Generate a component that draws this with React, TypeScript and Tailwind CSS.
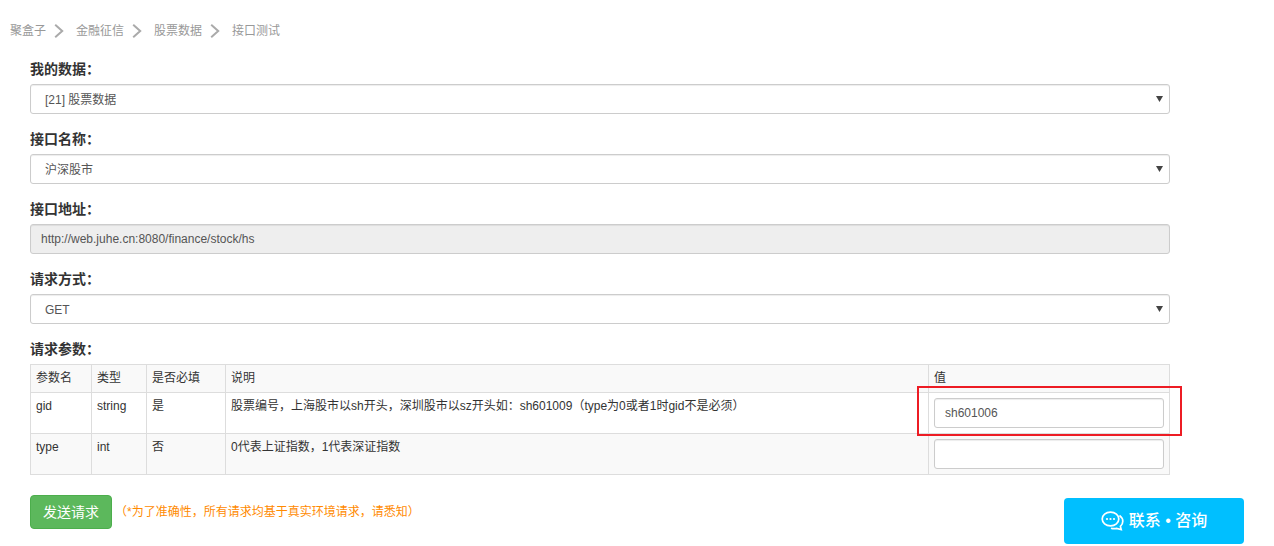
const crumbs = ["聚盒子", "金融征信", "股票数据", "接口测试"];

const gidDesc = "股票编号\uFF0C上海股市以sh开头\uFF0C深圳股市以sz开头如\uFF1Ash601009\uFF08type为0或者1时gid不是必须\uFF09";
const typeDesc = "0代表上证指数\uFF0C1代表深证指数";
const notice = "\uFF08*为了准确性\uFF0C所有请求均基于真实环境请求\uFF0C请悉知\uFF09";

const Chevron = () => (
  <svg width="10" height="14" viewBox="0 0 10 14" fill="none" className="ml-[8px] mr-[12px]">
    <path d="M1.2 0.8 L8.2 7 L1.2 13.2" stroke="#aaaaaa" strokeWidth="2" />
  </svg>
);

const FieldLabel = ({ text }: { text: string }) => (
  <label className="block h-[24px] leading-[18px] text-[14px] font-bold text-[#333]">{text + "\uFF1A"}</label>
);

const FieldSelect = ({ label, value }: { label: string; value: string }) => (
  <div className="mb-[16px]">
    <FieldLabel text={label} />
    <div className="relative">
      <select
        defaultValue={value}
        className="block w-full h-[30px] appearance-none rounded-[3px] border border-[#ccc] bg-white pl-[14px] pt-[2px] text-[12px] text-[#555] shadow-[inset_0_1px_1px_rgba(0,0,0,0.075)]"
      >
        <option>{value}</option>
      </select>
      <svg width="7" height="6" viewBox="0 0 7 6" className="absolute right-[7px] top-[12px] pointer-events-none">
        <path d="M0 0 H7 L3.5 6 Z" fill="#444444" />
      </svg>
    </div>
  </div>
);

const Th = ({ children }: { children: React.ReactNode }) => (
  <th className="border border-[#ddd] px-[5px] py-[5px] text-left align-top font-normal text-[12px] leading-[17px]">
    {children}
  </th>
);

const Td = ({ children }: { children: React.ReactNode }) => (
  <td className="border border-[#ddd] px-[5px] pt-[5px] align-top text-[12px] leading-[17px]">{children}</td>
);

const ValueInput = ({ value }: { value?: string }) => (
  <input
    defaultValue={value}
    className="block w-[230px] h-[30px] rounded-[3px] border border-[#ccc] bg-white px-[10px] text-[12px] text-[#555] shadow-[inset_0_1px_1px_rgba(0,0,0,0.075)]"
  />
);

const ChatIcon = () => (
  <svg width="23" height="20" viewBox="0 0 23 20" fill="none" className="mr-[5px]">
    <path
      d="M9.5 1.2 C4.8 1.2 1.2 4.2 1.2 8 C1.2 11.8 4.8 14.8 9.5 14.8 C14.2 14.8 17.8 11.8 17.8 8 C17.8 4.2 14.2 1.2 9.5 1.2 Z"
      stroke="white"
      strokeWidth="1.7"
    />
    <path
      d="M18.5 4.5 C20.6 6 21.8 8 21.8 10.2 C21.8 12.4 20.8 14.2 19.4 15.4 L20.2 18.6 L15.6 17.4 C13.6 17.9 11.8 17.8 10 17.2"
      stroke="white"
      strokeWidth="1.7"
    />
    <circle cx="6" cy="8" r="1.1" fill="white" />
    <circle cx="9.5" cy="8" r="1.1" fill="white" />
    <circle cx="13" cy="8" r="1.1" fill="white" />
  </svg>
);

export default function App() {
  return (
    <div className="relative h-[546px] overflow-hidden bg-white font-['Liberation_Sans','Noto_Sans_CJK_SC',sans-serif] text-[#333]">
      <div className="flex items-center h-[60px] pt-[2px] pl-[10px] text-[12px] text-[#999]">
        {crumbs.map((c, i) => (
          <div key={c} className="flex items-center">
            <span>{c}</span>
            {i < crumbs.length - 1 && <Chevron />}
          </div>
        ))}
      </div>

      <div className="w-[1140px] ml-[30px]">
        <FieldSelect label="我的数据" value="[21] 股票数据" />
        <FieldSelect label="接口名称" value="沪深股市" />

        <div className="mb-[16px]">
          <FieldLabel text="接口地址" />
          <input
            disabled
            value="http://web.juhe.cn:8080/finance/stock/hs"
            className="block w-full h-[30px] rounded-[3px] border border-[#ccc] bg-[#eee] px-[10px] text-[12px] text-[#555] shadow-[inset_0_1px_1px_rgba(0,0,0,0.075)]"
          />
        </div>

        <FieldSelect label="请求方式" value="GET" />

        <FieldLabel text="请求参数" />
        <table className="w-[1139px] table-fixed border-collapse">
          <colgroup>
            <col className="w-[61px]" />
            <col className="w-[55px]" />
            <col className="w-[79px]" />
            <col className="w-[703px]" />
            <col className="w-[241px]" />
          </colgroup>
          <thead>
            <tr className="h-[28px] bg-[#f9f9f9]">
              <Th>参数名</Th>
              <Th>类型</Th>
              <Th>是否必填</Th>
              <Th>说明</Th>
              <Th>值</Th>
            </tr>
          </thead>
          <tbody>
            <tr className="h-[41px]">
              <Td>gid</Td>
              <Td>string</Td>
              <Td>是</Td>
              <Td>{gidDesc}</Td>
              <Td>
                <ValueInput value="sh601006" />
              </Td>
            </tr>
            <tr className="h-[41px] bg-[#f9f9f9]">
              <Td>type</Td>
              <Td>int</Td>
              <Td>否</Td>
              <Td>{typeDesc}</Td>
              <Td>
                <ValueInput />
              </Td>
            </tr>
          </tbody>
        </table>

        <div className="flex items-center mt-[20px]">
          <button className="w-[82px] h-[34px] rounded-[4px] border border-[#4cae4c] bg-[#5cb85c] text-[14px] text-white">
            发送请求
          </button>
          <span className="ml-[3px] text-[12px] text-[#ff8a00]">{notice}</span>
        </div>
      </div>

      {/* red annotation drawn over the table */}
      <div className="absolute left-[917px] top-[386px] w-[265px] h-[50px] border-2 border-[#ed1c24] pointer-events-none" />

      <button className="absolute left-[1064px] top-[498px] w-[180px] h-[46px] rounded-[4px] bg-[#00bfff] text-white flex items-center justify-center text-[16px] font-medium">
        <ChatIcon />
        联系 • 咨询
      </button>
    </div>
  );
}
